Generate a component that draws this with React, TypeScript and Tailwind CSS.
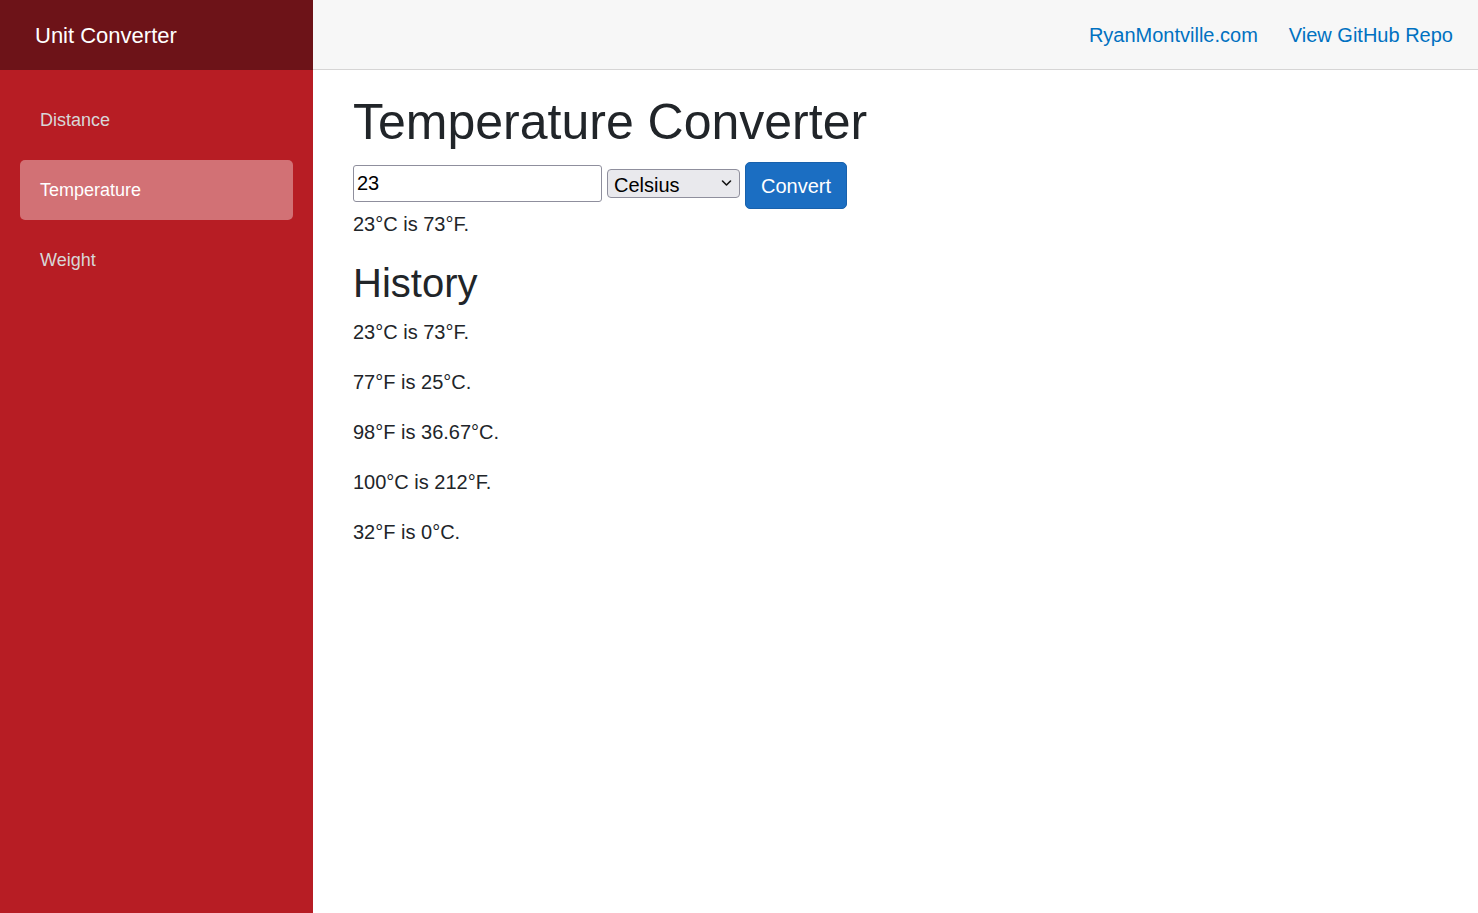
import React, { useState } from 'react';

const navItems = ['Distance', 'Temperature', 'Weight'];

const history = [
    '23°C is 73°F.',
    '77°F is 25°C.',
    '98°F is 36.67°C.',
    '100°C is 212°F.',
    '32°F is 0°C.',
];

const Sidebar: React.FC<{ active: string }> = ({ active }) => (
    <div className="w-[313px] shrink-0 bg-[#b71d24] flex flex-col">
        <div className="h-[70px] bg-[#6d1318] flex items-center pl-[35px]">
            <span className="text-white text-[22px]">Unit Converter</span>
        </div>
        <nav className="flex flex-col pt-[20px]">
            {navItems.map(item => (
                <div key={item} className="px-[20px] pb-[10px]">
                    <a
                        href="#"
                        className={
                            item === active
                                ? 'flex items-center h-[60px] rounded-[5px] pl-[20px] text-[18px] text-white bg-[#d27175]'
                                : 'flex items-center h-[60px] rounded-[5px] pl-[20px] text-[18px] text-[#d7d7d7]'
                        }
                    >
                        {item}
                    </a>
                </div>
            ))}
        </nav>
    </div>
);

const App: React.FC = () => {
    const [value, setValue] = useState('23');

    return (
        <div className="min-h-screen flex bg-white" style={{ fontFamily: '"Liberation Sans", Arial, sans-serif' }}>
            <Sidebar active="Temperature" />
            <div className="flex-1 flex flex-col">
                <div className="h-[70px] bg-[#f7f7f7] border-b border-[#d6d5d5] flex items-center justify-end pr-[25px] gap-[31px]">
                    <a href="#" className="text-[20px] text-[#0071c1]">RyanMontville.com</a>
                    <a href="#" className="text-[20px] text-[#0071c1]">View GitHub Repo</a>
                </div>
                <main className="pt-[22px] pl-[40px] text-[#212529]">
                    <h1 className="text-[50px] leading-[60px] mb-[10px]">Temperature Converter</h1>
                    <div className="flex items-start gap-[5px]">
                        <input
                            value={value}
                            onChange={e => setValue(e.target.value)}
                            className="mt-[3px] w-[249px] h-[37px] border border-[#8f8f9d] rounded-[3px] px-[3px] text-[20px] text-black outline-none"
                        />
                        <div className="relative mt-[7px]">
                            <select className="appearance-none w-[133px] h-[29px] bg-[#e9e9ed] border border-[#8f8f9d] rounded-[4px] pl-[6px] text-[20px] text-black outline-none">
                                <option>Celsius</option>
                                <option>Fahrenheit</option>
                            </select>
                            <svg className="absolute right-[8px] top-[10px] pointer-events-none" width="11" height="8" viewBox="0 0 11 8" fill="none">
                                <path d="M1.5 2 L5.5 6 L9.5 2" stroke="#111" strokeWidth="1.6" strokeLinecap="round" strokeLinejoin="round" />
                            </svg>
                        </div>
                        <button className="h-[47px] px-[15px] bg-[#1b6ec2] border border-[#1861ac] rounded-[5px] text-white text-[20px] leading-[30px]">
                            Convert
                        </button>
                    </div>
                    <p className="text-[20px] leading-[30px] mb-[20px]">23°C is 73°F.</p>
                    <h2 className="text-[40px] leading-[48px] mb-[10px]">History</h2>
                    {history.map(h => (
                        <p key={h} className="text-[20px] leading-[30px] mb-[20px]">{h}</p>
                    ))}
                </main>
            </div>
        </div>
    );
};

export default App;
